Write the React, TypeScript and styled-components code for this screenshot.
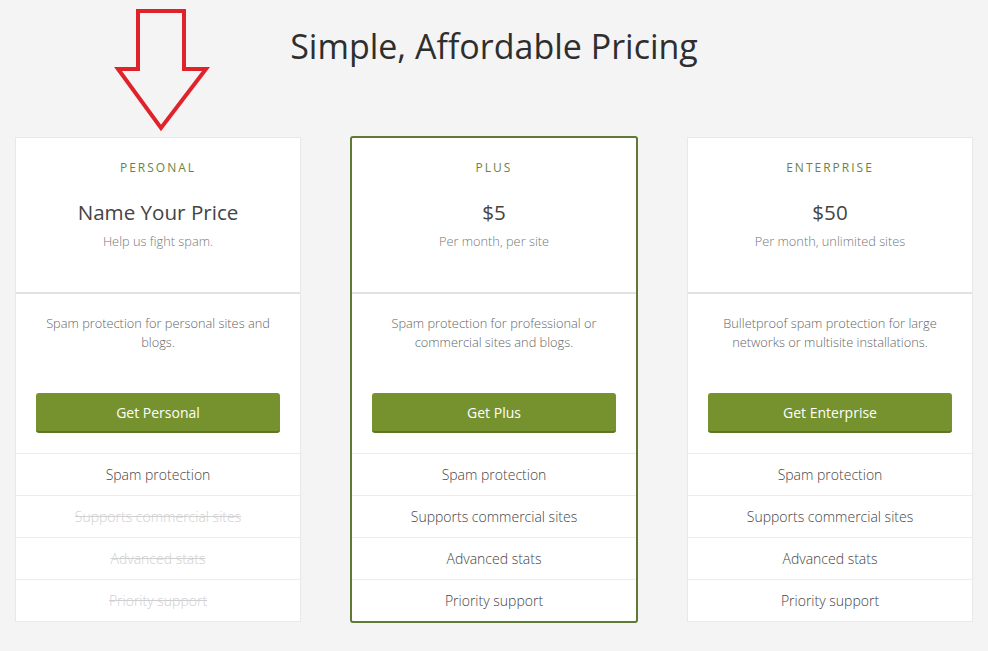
import * as React from 'react';
import styled, { createGlobalStyle } from 'styled-components';

interface Plan {
  name: string;
  price: string;
  priceNote: string;
  description: string;
  cta: string;
  featured?: boolean;
  features: { label: string; included: boolean }[];
}

const plans: Plan[] = [
  {
    name: 'Personal',
    price: 'Name Your Price',
    priceNote: 'Help us fight spam.',
    description: 'Spam protection for personal sites and blogs.',
    cta: 'Get Personal',
    features: [
      { label: 'Spam protection', included: true },
      { label: 'Supports commercial sites', included: false },
      { label: 'Advanced stats', included: false },
      { label: 'Priority support', included: false },
    ],
  },
  {
    name: 'Plus',
    price: '$5',
    priceNote: 'Per month, per site',
    description: 'Spam protection for professional or commercial sites and blogs.',
    cta: 'Get Plus',
    featured: true,
    features: [
      { label: 'Spam protection', included: true },
      { label: 'Supports commercial sites', included: true },
      { label: 'Advanced stats', included: true },
      { label: 'Priority support', included: true },
    ],
  },
  {
    name: 'Enterprise',
    price: '$50',
    priceNote: 'Per month, unlimited sites',
    description: 'Bulletproof spam protection for large networks or multisite installations.',
    cta: 'Get Enterprise',
    features: [
      { label: 'Spam protection', included: true },
      { label: 'Supports commercial sites', included: true },
      { label: 'Advanced stats', included: true },
      { label: 'Priority support', included: true },
    ],
  },
];

const GlobalStyle = createGlobalStyle`
  body {
    margin: 0;
    background: #f4f4f4;
    font-family: "Open Sans", "Liberation Sans", sans-serif;
    color: #333;
  }
`;

const Page = styled.div`
  position: relative;
  width: 988px;
  height: 651px;
  padding-top: 24px;
  box-sizing: border-box;
`;

const Title = styled.h1`
  margin: 0;
  text-align: center;
  font-size: 34px;
  line-height: 44px;
  font-weight: 400;
  color: #2e2e2e;
`;

const Arrow = styled.svg`
  position: absolute;
  left: 114px;
  top: 8px;
`;

const Grid = styled.div`
  display: grid;
  grid-template-columns: 286px 288px 286px;
  column-gap: 49px;
  justify-content: center;
  align-items: start;
  margin-top: 69px;
`;

const Card = styled.div<{ $featured?: boolean }>`
  background: #fff;
  border: ${(p) => (p.$featured ? '2px solid #5f7a34' : '1px solid #e8e8e8')};
  border-radius: ${(p) => (p.$featured ? '3px' : '0')};
  margin-top: ${(p) => (p.$featured ? '-1px' : '0')};
  display: flex;
  flex-direction: column;
`;

const Header = styled.div`
  height: 156px;
  box-sizing: border-box;
  padding-top: 22px;
  text-align: center;
  border-bottom: 2px solid #e2e2e2;
`;

const PlanName = styled.div`
  font-size: 12px;
  line-height: 16px;
  letter-spacing: 2px;
  text-transform: uppercase;
  color: #6c833f;
`;

const Price = styled.div`
  margin-top: 22px;
  font-size: 20.6px;
  line-height: 28px;
  color: #444;
`;

const PriceNote = styled.div`
  margin-top: 6px;
  font-size: 12.8px;
  line-height: 18px;
  font-weight: 300;
  color: #777;
`;

const Body = styled.div`
  height: 159px;
  box-sizing: border-box;
  padding: 20px 20px 20px;
  display: flex;
  flex-direction: column;
  align-items: center;
`;

const Description = styled.p`
  margin: 0;
  padding: 0 8px;
  font-size: 12.8px;
  line-height: 19px;
  font-weight: 300;
  color: #666;
  text-align: center;
`;

const Button = styled.button`
  margin-top: auto;
  width: 244px;
  height: 40px;
  border: none;
  border-bottom: 2px solid #5d7526;
  border-radius: 3px;
  background: #76922f;
  color: #fff;
  font-family: "Open Sans", "Liberation Sans", sans-serif;
  font-size: 14px;
  cursor: pointer;
`;

const FeatureRow = styled.div<{ $included: boolean }>`
  height: 42px;
  box-sizing: border-box;
  border-top: 1px solid #ececec;
  display: flex;
  align-items: center;
  justify-content: center;
  font-size: 14px;
  font-weight: 300;
  color: ${(p) => (p.$included ? '#444' : '#d0d0d0')};
  text-decoration: ${(p) => (p.$included ? 'none' : 'line-through')};
`;

function DownArrow() {
  return (
    <Arrow width="96" height="124" viewBox="0 0 96 124">
      <polygon
        points="24,3 70,3 70,61 92,61 47,120 4,61 24,61"
        fill="none"
        stroke="#e0232b"
        strokeWidth="4"
        strokeLinejoin="miter"
      />
    </Arrow>
  );
}

export default function App() {
  return (
    <>
      <GlobalStyle />
      <Page>
        <Title>Simple, Affordable Pricing</Title>
        <Grid>
          {plans.map((plan) => (
            <Card key={plan.name} $featured={plan.featured}>
              <Header>
                <PlanName>{plan.name}</PlanName>
                <Price>{plan.price}</Price>
                <PriceNote>{plan.priceNote}</PriceNote>
              </Header>
              <Body>
                <Description>{plan.description}</Description>
                <Button>{plan.cta}</Button>
              </Body>
              {plan.features.map((f) => (
                <FeatureRow key={f.label} $included={f.included}>
                  {f.label}
                </FeatureRow>
              ))}
            </Card>
          ))}
        </Grid>
        <DownArrow />
      </Page>
    </>
  );
}
